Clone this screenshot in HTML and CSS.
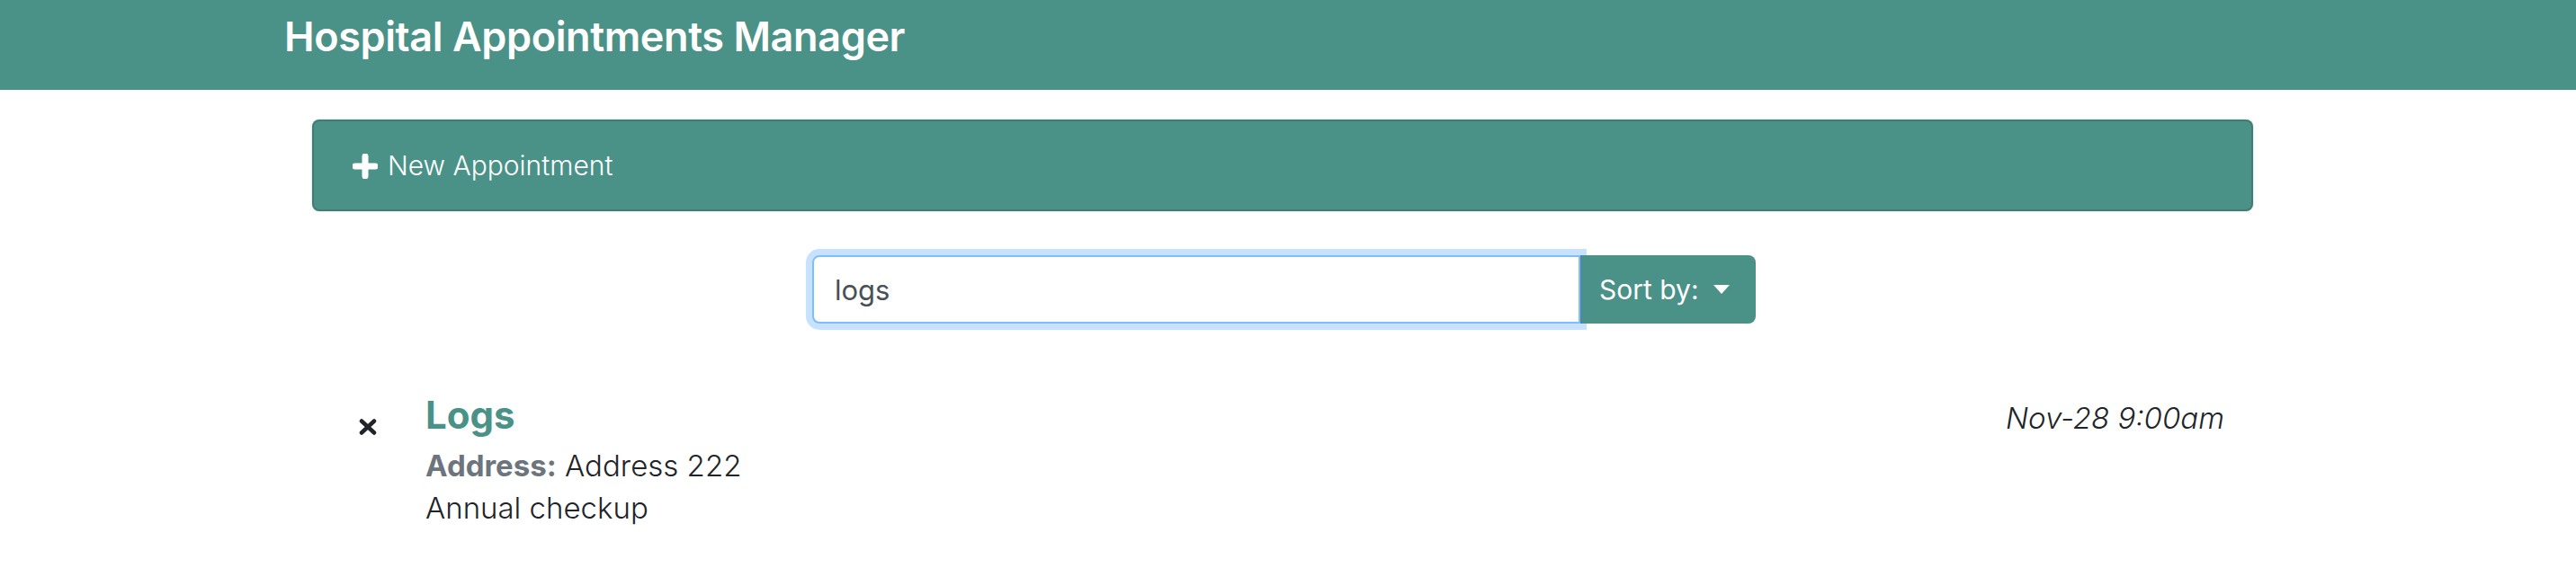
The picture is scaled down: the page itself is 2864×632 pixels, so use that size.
FILE: index.html
```html
<!DOCTYPE html>
<html lang="en">
<head>
<meta charset="utf-8">
<title>Hospital Appointments Manager</title>
<link rel="stylesheet" href="styles.css">
</head>
<body>
<header class="topbar">
  <div class="container">
    <h1 class="brand">Hospital Appointments Manager</h1>
  </div>
</header>
<main class="container">
  <section class="add-card">
    <div class="add-head">
      <svg class="plus" viewBox="0 0 28 28" width="28" height="28" aria-hidden="true">
        <path d="M14 3v22M3 14h22" stroke="#fff" stroke-width="7" stroke-linecap="round"/>
      </svg>
      <span class="add-label">New Appointment</span>
    </div>
  </section>

  <div class="search-row">
    <div class="search-group">
      <input class="search-input" type="text" value="logs">
      <button class="sort-btn" type="button">Sort by: <span class="caret"></span></button>
    </div>
  </div>

  <ul class="appt-list">
    <li class="appt">
      <button class="del" type="button" aria-label="Delete">
        <svg viewBox="0 0 20 18" width="20" height="18" aria-hidden="true">
          <path d="M3 2.5l14 13M17 2.5l-14 13" stroke="#212529" stroke-width="4.5" stroke-linecap="round"/>
        </svg>
      </button>
      <div class="appt-body">
        <h2 class="appt-name">Logs</h2>
        <div class="appt-line"><span class="label">Address:</span> Address 222</div>
        <div class="appt-line">Annual checkup</div>
      </div>
      <div class="appt-date">Nov-28 9:00am</div>
    </li>
  </ul>
</main>
</body>
</html>
```

FILE: styles.css
```css
* { box-sizing: border-box; }

html, body {
  margin: 0;
  padding: 0;
  background: #fff;
  color: #212529;
  font-family: Inter, Roboto, "Liberation Sans", Arial, sans-serif;
}

.container {
  width: 2232px;
  margin: 0 auto;
}

.topbar {
  background: #4a9288;
  height: 100px;
}

.brand {
  margin: 0;
  padding-top: 13px;
  color: #fff;
  font-size: 45px;
  font-weight: 600;
  line-height: 56px;
  letter-spacing: -0.4px;
}

.add-card {
  margin: 33px 43px 0 31px;
  height: 102px;
  background: #4a9288;
  border: 2px solid rgba(0, 0, 0, 0.14);
  border-radius: 8px;
  box-shadow: 0 0 2px rgba(0, 0, 0, 0.25);
}

.add-head {
  display: flex;
  align-items: center;
  height: 100%;
  padding-left: 43px;
  color: #fff;
}

.plus {
  display: block;
  margin-right: 11px;
  margin-top: 2px;
}

.add-label {
  font-size: 30px;
  font-weight: 300;
}

.search-row {
  display: flex;
  justify-content: center;
  margin-top: 49px;
  padding-right: 9px;
}

.search-group {
  display: flex;
  width: 1049px;
  height: 76px;
}

.search-input {
  flex: 1;
  height: 76px;
  margin: 0;
  padding: 0 23px;
  border: 2px solid #80bdff;
  border-radius: 8px 0 0 8px;
  box-shadow: 0 0 0 7px rgba(0, 123, 255, 0.22);
  font-family: Inter, Roboto, "Liberation Sans", Arial, sans-serif;
  font-size: 31px;
  color: #495057;
  outline: none;
}

.sort-btn {
  width: 195px;
  height: 76px;
  margin: 0;
  padding: 0 0 0 19px;
  display: flex;
  align-items: center;
  background: #4a9288;
  border: 0;
  border-left: 2px solid #4a8aa0;
  border-radius: 0 8px 8px 0;
  color: #fff;
  font-family: Inter, Roboto, "Liberation Sans", Arial, sans-serif;
  font-size: 30px;
  font-weight: 400;
}

.caret {
  display: inline-block;
  width: 0;
  height: 0;
  margin-left: 16px;
  border-left: 9px solid transparent;
  border-right: 9px solid transparent;
  border-top: 10px solid #fff;
}

.appt-list {
  list-style: none;
  margin: 0;
  padding: 0;
}

.appt {
  display: flex;
  align-items: flex-start;
  margin: 76px 75px 0 83px;
}

.del {
  margin: 30px 0 0 0;
  padding: 0;
  border: 0;
  background: none;
  width: 74px;
  display: flex;
  justify-content: flex-start;
}

.del svg { display: block; }

.appt-body {
  flex: 1;
}

.appt-name {
  margin: 0 0 7px;
  color: #4a9288;
  font-size: 42px;
  font-weight: 700;
  line-height: 52px;
}

.appt-line {
  font-size: 33px;
  font-weight: 300;
  line-height: 47px;
}

.label {
  font-weight: 700;
  color: #6c757d;
}

.appt-date {
  margin-top: 3px;
  font-size: 33px;
  font-weight: 300;
  font-style: italic;
  line-height: 52px;
}
```
